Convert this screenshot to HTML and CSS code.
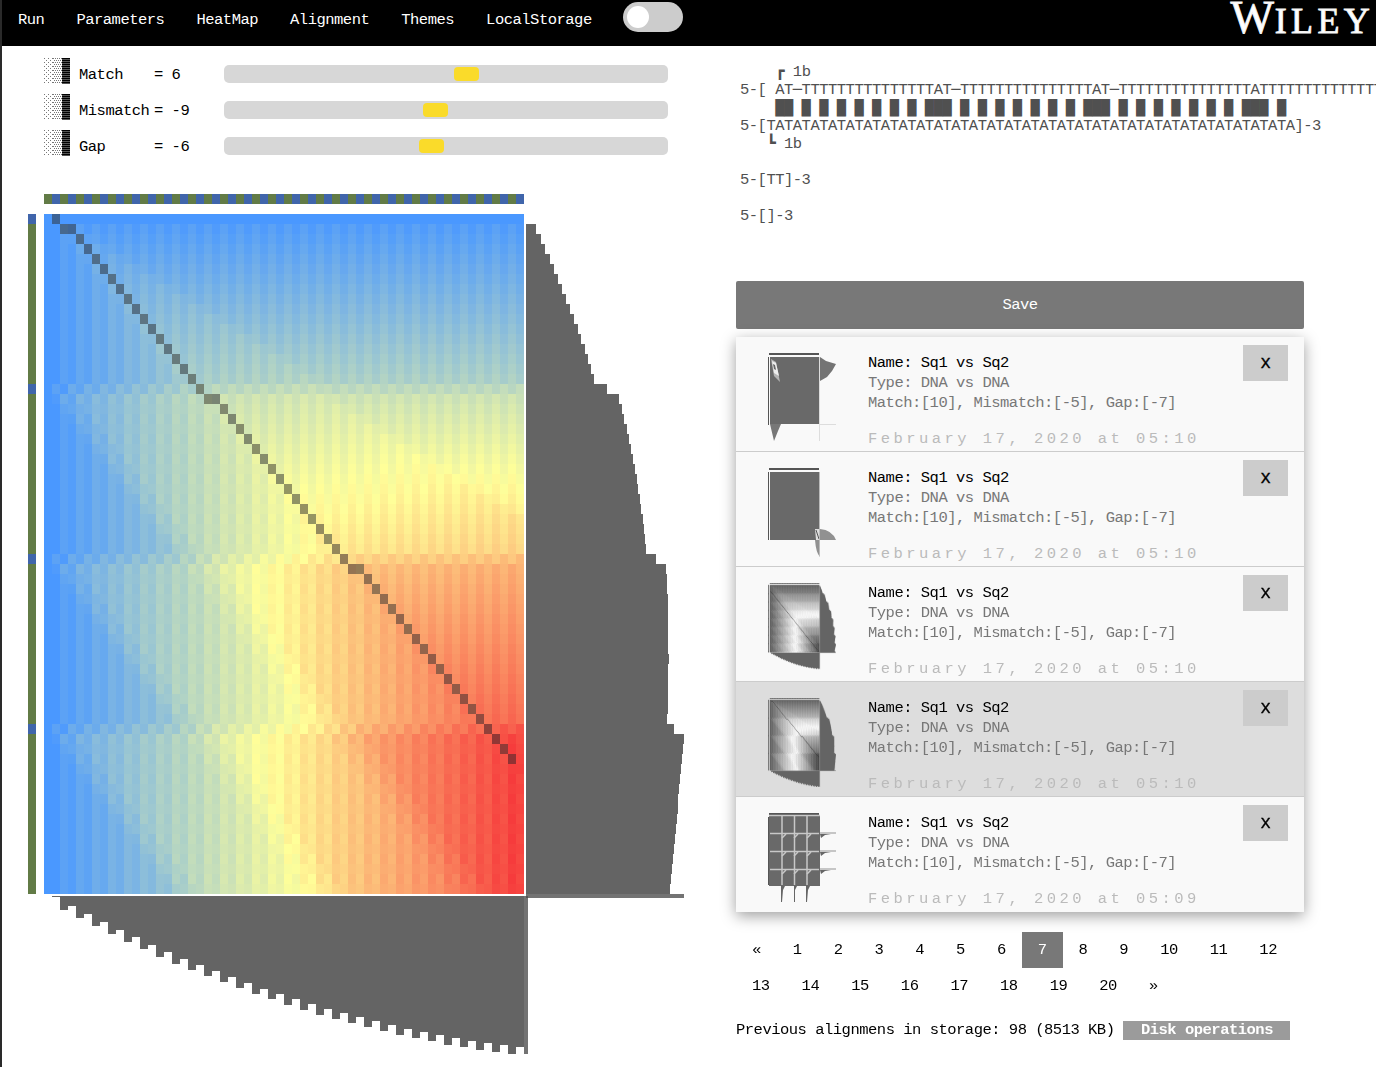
FILE: index.html
```html
<!DOCTYPE html>
<html lang="en">
<head>
<meta charset="utf-8">
<title>Sequence alignment</title>
<link rel="stylesheet" href="styles.css">
</head>
<body>
<header class="topbar">
  <nav class="menu">
    <a>Run</a><a>Parameters</a><a>HeatMap</a><a>Alignment</a><a>Themes</a><a>LocalStorage</a>
    <span class="toggle"><span class="knob"></span></span>
  </nav>
  <div class="brand">W<span>ILEY</span></div>
</header>
<main class="page">
  <section class="left">
    <div class="param"><span class="shade"><i class="light"></i><i class="medium"></i><i class="dark"></i></span><span class="pname">Match</span><span class="pval">= 6</span><span class="track"><span class="thumb" style="margin-left:230px"></span></span></div>
    <div class="param"><span class="shade"><i class="light"></i><i class="medium"></i><i class="dark"></i></span><span class="pname">Mismatch</span><span class="pval">= -9</span><span class="track"><span class="thumb" style="margin-left:199px"></span></span></div>
    <div class="param"><span class="shade"><i class="light"></i><i class="medium"></i><i class="dark"></i></span><span class="pname">Gap</span><span class="pval">= -6</span><span class="track"><span class="thumb" style="margin-left:195px"></span></span></div>
    <canvas id="map" class="map" width="656" height="860"></canvas>
  </section>
  <section class="right">
    <pre class="alignment" id="alignment"></pre>
    <div class="library">
      <button class="save">Save</button>
      <ul class="history" id="history"></ul>
      <div class="pager" id="pager"></div>
      <div class="storage"><span>Previous alignmens in storage: 98 (8513 KB)</span><button class="disk">Disk operations</button></div>
    </div>
  </section>
</main>
<script src="app.js"></script>
</body>
</html>
```
FILE: styles.css
```css
* { box-sizing: border-box; }
body {
  margin: 0;
  width: 1376px;
  height: 1067px;
  overflow: hidden;
  border-left: 2px solid #2a2a2a;
  background: #fff;
  color: #000;
  font: 15.5px/20px "Liberation Mono", monospace;
  letter-spacing: -0.5px;
}
button { font: inherit; letter-spacing: inherit; border: 0; padding: 0; }
.topbar {
  height: 46px;
  background: #000;
  color: #fff;
  display: flex;
  justify-content: space-between;
}
.menu { display: flex; align-items: flex-start; }
.menu a { padding: 10px 16px; white-space: nowrap; }
.toggle {
  width: 60px;
  height: 30px;
  margin: 2px 0 0 15px;
  padding: 4px;
  border-radius: 15px;
  background: #ccc;
}
.knob { display: block; width: 22px; height: 22px; border-radius: 50%; background: #fff; }
.brand {
  font: 46px/36px "Liberation Serif", serif;
  letter-spacing: 1px;
  padding-right: 6px;
  white-space: nowrap;
  -webkit-text-stroke: 0.9px #f4f4f4;
}
.brand span { font-size: 36px; letter-spacing: 4.3px; margin-right: -4px; }
.page { display: flex; }
.left { width: 734px; padding-top: 10px; }
.param { display: flex; height: 36px; padding-left: 42px; align-items: flex-start; }
.shade { width: 35px; height: 26px; margin-top: 2px; display: flex; }
.shade i { width: 9px; height: 26px; }
.shade .light {
  background: conic-gradient(from 270deg at 1px 1px, #777 90deg, transparent 0) 0 0 / 4px 4px, conic-gradient(from 270deg at 1px 1px, #777 90deg, transparent 0) 2px 2px / 4px 4px;
}
.shade .medium {
  background: conic-gradient(from 270deg at 1px 1px, #777 90deg, transparent 0) 0 0 / 2px 4px, conic-gradient(from 270deg at 1px 1px, #777 90deg, transparent 0) 1px 2px / 2px 4px;
}
.shade .dark { width: 8px; background: repeating-linear-gradient(#000 0 1px, #555 1px 2px); }
.pname { width: 75px; padding-top: 9px; }
.pval { width: 70px; padding-top: 9px; }
.track { width: 444px; height: 18px; margin-top: 9px; padding: 2px 0; border-radius: 5px; background: #d7d7d7; }
.thumb { display: block; width: 25px; height: 14px; border-radius: 4px; background: #fadb2a; }
.map { display: block; margin: 30px 0 0 26px; }
.right { width: 640px; padding-top: 17px; }
.library { width: 568px; }
.alignment {
  margin: 0;
  height: 218px;
  padding-left: 4px;
  overflow: hidden;
  font: inherit;
  line-height: 18px;
  color: #505050;
  white-space: pre;
}
.save {
  display: block;
  width: 568px;
  height: 48px;
  border-radius: 2px;
  background: #787878;
  color: #fff;
}
.history {
  list-style: none;
  margin: 8px 0 20px;
  padding: 0;
  box-shadow: 0 4px 14px rgba(0, 0, 0, 0.38);
}
.entry {
  display: flex;
  height: 115px;
  background: #f9f9f9;
  border-bottom: 1px solid #ccc;
}
.entry:last-child { border-bottom-color: #f9f9f9; }
.entry.selected { background: #ddd; }
.preview { width: 132px; padding: 16px 0 0 32px; }
.preview canvas, .preview svg { display: block; width: 68px; height: 89px; }
.info { flex: 1; padding-top: 16px; color: #777; }
.info div { height: 20px; }
.info .name { color: #000; }
.info .when { margin-top: 16px; color: #bbb; letter-spacing: 3.46px; }
.close { width: 45px; height: 36px; margin: 8px 16px 0 0; background: #ccc; font-size: 18px; -webkit-text-stroke: 0.3px #000; }
.pager { display: flex; flex-wrap: wrap; }
.pager span { padding: 8px 16px; height: 36px; }
.pager .active { background: #787878; color: #fff; }
.storage { display: flex; margin-top: 16px; align-items: center; height: 20px; }
.disk { width: 167px; height: 19px; margin-left: 9px; background: #9b9b9b; color: #fff; font-weight: bold; line-height: 19px; }
```
FILE: app.js
```js
// Local alignment matrix for two sequences
function repeat(unit, n) { return Array(n + 1).join(unit); }

function align(top, side, match, mismatch, gap) {
  const H = side.map(() => top.map(() => 0));
  H[0][1] = 4;
  let best = [0, 0];
  for (let r = 1; r < side.length; r++) {
    for (let c = 1; c < top.length; c++) {
      const s = top[c] === side[r] ? match : mismatch;
      H[r][c] = Math.max(0, H[r - 1][c - 1] + s, H[r - 1][c] + gap, H[r][c - 1] + gap);
      if (H[r][c] > H[best[0]][best[1]]) best = [r, c];
    }
  }
  const path = [];
  let [r, c] = best;
  while (r >= 0 && c >= 0) {
    path.push([r, c]);
    if (r === 0 || c === 0 || H[r][c] === 0) break;
    const s = top[c] === side[r] ? match : mismatch;
    if (H[r][c] === H[r - 1][c - 1] + s) { r--; c--; }
    else if (H[r][c] === H[r][c - 1] + gap) c--;
    else r--;
  }
  const max = H[best[0]][best[1]];
  H[0] = top.map(() => 0);
  return { H, path, max };
}

function mix(stops, t) {
  const k = t < 0.5 ? 0 : 1, u = (t - k * 0.5) * 2;
  const v = stops[k].map((a, i) => Math.round(a + (stops[k + 1][i] - a) * u));
  return 'rgb(' + v.join(',') + ')';
}

const axis = { A: '#4065ab', T: '#627b46' };
const axisGrey = { A: '#606060', T: '#727272' };

function drawMap(canvas, top, side, stops, color) {
  const g = canvas.getContext('2d');
  const { H, path, max } = align(top, side, 10, -4.5, -6.75);
  top.forEach((ch, c) => { g.fillStyle = color[ch]; g.fillRect(16 + c * 8, 0, 8, 10); });
  side.forEach((ch, r) => { g.fillStyle = color[ch]; g.fillRect(0, 20 + r * 10, 8, 10); });
  H.forEach((row, r) => row.forEach((v, c) => {
    g.fillStyle = mix(stops, v / max);
    g.fillRect(16 + c * 8, 20 + r * 10, 8, 10);
  }));
  g.fillStyle = 'rgba(43,43,43,0.5)';
  path.forEach(([r, c]) => g.fillRect(16 + c * 8, 20 + r * 10, 8, 10));
  const rows = H.map(row => row.reduce((a, b) => a + b, 0));
  const cols = top.map((_, c) => H.reduce((a, row) => a + row[c], 0));
  const rMax = Math.max(...rows), cMax = Math.max(...cols);
  const bar = (v, most) => v === 0 ? 0 : Math.round(v / most * 157.3 + 0.7);
  const bottom = 20 + side.length * 10;
  g.fillStyle = '#646464';
  rows.forEach((v, r) => g.fillRect(498, 20 + r * 10, bar(v, rMax), 10));
  cols.forEach((v, c) => g.fillRect(16 + c * 8, bottom + 2, 8, bar(v, cMax)));
  g.fillStyle = 'rgba(80,80,80,0.8)';
  g.fillRect(498, bottom, 158, 4);
  g.fillRect(496, bottom + 2, 4, 158);
}

const topSeq = repeat('TA', 30).split('');
const sideSeq = repeat('A' + repeat('T', 16), 4).split('');
drawMap(document.getElementById('map'), topSeq, sideSeq, [[74, 152, 255], [255, 255, 153], [246, 56, 58]], axis);

// Text alignment
const fifteen = repeat('T', 15);
const bars = '    ██ ' + repeat('█ ', 7) + '███ ' + repeat('█ ', 7) + '███ ' + repeat('█ ', 7) + '███ █';
document.getElementById('alignment').textContent = [
  '    ┏ 1b',
  '5-[ AT─' + fifteen + 'AT─' + fifteen + 'AT─' + fifteen + 'A' + repeat('T', 24) + ']-3',
  bars,
  '5-[' + repeat('TA', 30) + ']-3',
  '   ┗ 1b',
  '',
  '5-[TT]-3',
  '',
  '5-[]-3'
].join('\n');

// Saved alignments
const frame = '<path d="M1 1H51" stroke="#555" stroke-width="2"/><path d="M.5 4V72" stroke="#555"/>';
const previews = [
  '<svg viewBox="0 0 68 89">' + frame + '<path fill="#696969" d="M2 4H51V71H2z"/><path fill="#b5b5b5" d="M3 6l5 3 4 20-6-6z"/><path fill="#eee" d="M4 8l4 2 3 13-5-3z"/><path fill="#666" d="M5 11l2 1 1 5-2-1z"/><path fill="#747474" d="M52 4l6 4 10 3-4 7-5 6-7 4z"/><path fill="#777" d="M2 71H13L10 78 6 88z"/><path stroke="#ddd" d="M51.500 4V88M52 71.500H68" fill="none"/></svg>',
  '<svg viewBox="0 0 68 89">' + frame + '<path fill="#696969" d="M2 4H51V72H2z"/><path fill="#ddd" d="M47 61h5v11h-4z"/><path stroke="#555" d="M48 62l3 9"/><path fill="#919191" d="M52 61q12 1 16 11H52zM47 72h5v17q-4-4-5-17z"/><path stroke="#bbb" d="M51.500 4V88" fill="none"/></svg>',
  null,
  null,
  '<svg viewBox="0 0 68 89">' + frame + '<path fill="#696969" d="M1 2H52V73H1z"/><g fill="none" stroke="#c8c8c8" stroke-width="1.500"><path d="M1 2.500H52M2 20.500H51M2 38.500H51M2 56.500H51M14 2V72M26.500 2V72M39 2V72"/><path d="M14 25l4-4M26 25l4-4M39 25l4-4M14 43l4-4M26 43l4-4M39 43l4-4M14 61l4-4M26 61l4-4M39 61l4-4"/></g><path stroke="#b5b5b5" stroke-width="1.500" d="M52 20H68M52 38H68M52 56H68"/><g fill="#666"><path d="M52 21h11l-6 1-4 3zM52 39h11l-6 1-4 3zM52 57h11l-6 1-4 3zM13 73h4l-2 4-1 12h-1zM26 73h3l-2 4v12h-1zM38 73h4l-2 4-1 12h-1z"/></g></svg>'
];
const grey = [[98, 98, 98], [248, 248, 248], [66, 66, 66]];
previews.forEach((svg, i) => {
  const li = document.createElement('li');
  li.className = 'entry' + (i === 3 ? ' selected' : '');
  li.innerHTML = '<div class="preview">' + (svg || '<canvas width="68" height="89"></canvas>') + '</div>' +
    '<div class="info"><div class="name">Name: Sq1 vs Sq2</div><div>Type: DNA vs DNA</div>' +
    '<div>Match:[10], Mismatch:[-5], Gap:[-7]</div><div class="when">February 17, 2020 at 05:' + (i === 4 ? '09' : '10') + '</div></div>' +
    '<button class="close">x</button>';
  document.getElementById('history').appendChild(li);
  if (!svg) {
    const side = i === 3 ? sideSeq : repeat('ATTTTTTT', 9).split('').slice(0, 65);
    const full = document.createElement('canvas');
    full.width = 656;
    full.height = 860;
    drawMap(full, topSeq, side, grey, axisGrey);
    const g = li.querySelector('canvas').getContext('2d');
    g.imageSmoothingQuality = 'high';
    g.drawImage(full, 0, 0, 68, 89);
  }
});

const pages = ['«'];
for (let n = 1; n <= 20; n++) pages.push(n);
pages.push('»');
document.getElementById('pager').innerHTML = pages.map(p => '<span' + (p === 7 ? ' class="active"' : '') + '>' + p + '</span>').join('');
```
